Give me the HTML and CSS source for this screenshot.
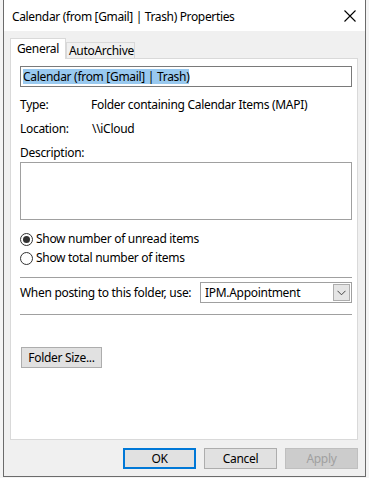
FILE: index.html
```html
<!DOCTYPE html>
<html>
<head>
<meta charset="utf-8">
<link rel="stylesheet" href="styles.css">
</head>
<body>
<div class="dialog">
  <div class="titlebar">
    <span class="title">Calendar (from [Gmail] | Trash) Properties</span>
    <svg class="close" width="12" height="12" viewBox="0 0 12 12"><path d="M0.5 0.5 L11.5 11.5 M11.5 0.5 L0.5 11.5" stroke="#000" stroke-width="1.1" fill="none"/></svg>
  </div>
  <div class="body">
    <div class="tabs">
      <div class="tab active">General</div>
      <div class="tab">AutoArchive</div>
    </div>
    <div class="panel">
      <div class="name-input"><span class="sel">Calendar (from [Gmail] | Trash)</span></div>
      <div class="row r-type"><span class="label">Type:</span><span>Folder containing Calendar Items (MAPI)</span></div>
      <div class="row r-loc"><span class="label">Location:</span><span class="val-loc">\\iCloud</span></div>
      <div class="row r-desc">Description:</div>
      <div class="desc-box"></div>
      <div class="row radio r1"><span class="rb checked"></span>Show number of unread items</div>
      <div class="row radio r2"><span class="rb"></span>Show total number of items</div>
      <div class="sep s1"></div>
      <div class="post-row">
        <span class="post-label">When posting to this folder, use:</span>
        <div class="combo">
          <span class="combo-text">IPM.Appointment</span>
          <span class="combo-btn"><svg width="9" height="6" viewBox="0 0 9 6"><path d="M0.5 0.8 L4.5 4.8 L8.5 0.8" stroke="#444" stroke-width="1" fill="none"/></svg></span>
        </div>
      </div>
      <div class="sep s2"></div>
      <div class="btn folder-btn">Folder Size...</div>
    </div>
    <div class="footer">
      <div class="btn fbtn ok">OK</div>
      <div class="btn fbtn">Cancel</div>
      <div class="btn fbtn disabled">Apply</div>
    </div>
  </div>
</div>
</body>
</html>
```
FILE: styles.css
```css
html, body {
  margin: 0;
  padding: 0;
}
body {
  width: 369px;
  height: 478px;
  background: #f4f4f4;
  font-family: "Noto Sans", "Open Sans", sans-serif;
  font-size: 12px;
  letter-spacing: -0.3px;
  color: #000;
  overflow: hidden;
}
.dialog {
  margin-left: 3px;
  width: 363px;
  height: 477px;
  box-sizing: border-box;
  border: 1px solid #6b6b6b;
  border-top: none;
  background: #f0f0f0;
  display: flex;
  flex-direction: column;
}
.titlebar {
  height: 31px;
  background: #fff;
  display: flex;
  align-items: center;
  padding-left: 8px;
  padding-right: 4px;
}
.title {
  flex: 1;
  font-size: 12px;
  letter-spacing: -0.35px;
  margin-top: 1px;
}
.close {
  margin-right: 5px;
}
.body {
  padding: 7px 6px 0 6px;
  display: flex;
  flex-direction: column;
}
.tabs {
  display: flex;
  align-items: flex-end;
  height: 20px;
  position: relative;
  z-index: 1;
}
.tab {
  box-sizing: border-box;
  border: 1px solid #d9d9d9;
  border-bottom: none;
  background: #f0f0f0;
  height: 16px;
  line-height: 15px;
  padding: 0 2px;
  width: 69px;
  text-align: center;
}
.tab.active {
  background: #fff;
  height: 21px;
  width: 56px;
  margin-bottom: -1px;
  line-height: 19px;
}
.panel {
  box-sizing: border-box;
  width: 348px;
  height: 382px;
  background: #fff;
  border: 1px solid #d9d9d9;
  padding: 7px 5px 0 9px;
  display: flex;
  flex-direction: column;
}
.name-input {
  box-sizing: border-box;
  width: 332px;
  height: 21px;
  border: 1px solid #7a7a7a;
  padding: 0 2px;
  display: flex;
  align-items: center;
}
.sel {
  background: #99c9ef;
  line-height: 15px;
}
.row {
  height: 16px;
  line-height: 16px;
  display: flex;
  align-items: center;
  white-space: nowrap;
}
.label {
  width: 71px;
  flex: none;
}
.val-loc {
  margin-left: 1px;
}
.r-type { margin-top: 10px; }
.r-loc { margin-top: 8px; }
.r-desc { margin-top: 8px; }
.desc-box {
  box-sizing: border-box;
  width: 332px;
  height: 58px;
  margin-top: 1px;
  border: 1px solid #a0a0a0;
}
.r1 { margin-top: 11px; }
.r2 { margin-top: 3px; }
.rb {
  box-sizing: border-box;
  width: 13px;
  height: 13px;
  border: 1px solid #333;
  border-radius: 50%;
  margin-right: 3px;
  display: inline-flex;
  align-items: center;
  justify-content: center;
  background: #fff;
}
.rb.checked::after {
  content: "";
  width: 7px;
  height: 7px;
  border-radius: 50%;
  background: #333;
}
.sep {
  width: 332px;
  height: 1px;
  background: #a0a0a0;
}
.s1 { margin-top: 11px; }
.s2 { margin-top: 11px; }
.post-row {
  margin-top: 4px;
  display: flex;
  align-items: center;
  height: 21px;
}
.post-label {
  width: 180px;
  flex: none;
  white-space: nowrap;
}
.combo {
  box-sizing: border-box;
  width: 152px;
  height: 21px;
  border: 1px solid #a0a0a0;
  display: flex;
  align-items: center;
  padding: 1px;
}
.combo-text {
  flex: 1;
  padding-left: 3px;
}
.combo-btn {
  box-sizing: border-box;
  width: 17px;
  height: 17px;
  background: #e5e5e5;
  border: 1px solid #adadad;
  display: flex;
  align-items: center;
  justify-content: center;
}
.btn {
  box-sizing: border-box;
  height: 21px;
  background: #e1e1e1;
  border: 1px solid #adadad;
  display: flex;
  align-items: center;
  justify-content: center;
}
.folder-btn {
  margin-top: 32px;
  margin-left: 1px;
  width: 81px;
}
.footer {
  display: flex;
  justify-content: flex-end;
  gap: 8px;
  margin-top: 8px;
  width: 348px;
}
.fbtn {
  width: 73px;
}
.ok {
  border: 2px solid #0078d7;
}
.disabled {
  background: #cccccc;
  border-color: #bfbfbf;
  color: #a0a0a0;
}
```
